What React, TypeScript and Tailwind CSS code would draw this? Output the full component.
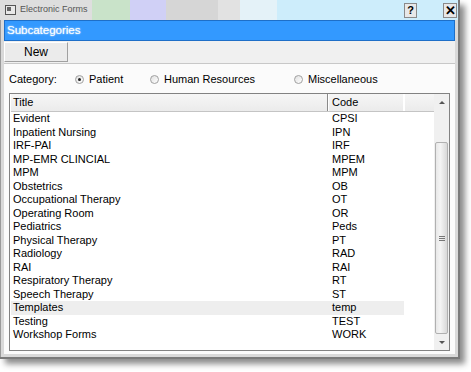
import React from "react";

const rows: [string, string][] = [
  ["Evident", "CPSI"],
  ["Inpatient Nursing", "IPN"],
  ["IRF-PAI", "IRF"],
  ["MP-EMR CLINCIAL", "MPEM"],
  ["MPM", "MPM"],
  ["Obstetrics", "OB"],
  ["Occupational Therapy", "OT"],
  ["Operating Room", "OR"],
  ["Pediatrics", "Peds"],
  ["Physical Therapy", "PT"],
  ["Radiology", "RAD"],
  ["RAI", "RAI"],
  ["Respiratory Therapy", "RT"],
  ["Speech Therapy", "ST"],
  ["Templates", "temp"],
  ["Testing", "TEST"],
  ["Workshop Forms", "WORK"],
];

function Radio({ checked, label }: { checked?: boolean; label: string }) {
  return (
    <div className="flex items-center gap-[5px]">
      <div className="w-[9px] h-[9px] rounded-full border border-[#a0a0a0] bg-[linear-gradient(135deg,#e0e0e0,#ffffff)] flex items-center justify-center">
        {checked && <div className="w-[3px] h-[3px] rounded-full bg-[#222]" />}
      </div>
      <span>{label}</span>
    </div>
  );
}

export default function App() {
  return (
    <div className="w-[471px] h-[372px] bg-white relative overflow-hidden" style={{ fontFamily: '"Liberation Sans", Arial, sans-serif' }}>
      <div className="w-[460px] h-[359px] flex flex-col bg-[#d9d9d9] border-r-2 border-b-2 border-[#7a7a7a] shadow-[5px_5px_6px_rgba(0,0,0,0.45)]">
        {/* Title bar */}
        <div className="h-[20px] flex items-center bg-[linear-gradient(to_right,#dedede_0px,#dedede_92px,#c9e3c9_92px,#c9e3c9_130px,#d0d0f6_130px,#d0d0f6_166px,#d6d6d6_166px,#d6d6d6_218px,#e2e2e2_218px,#e2e2e2_240px,#e4f2f8_240px,#e4f2f8_277px,#cdedfb_277px,#cdedfb_460px)]">
          <div className="ml-[5px] w-[11px] h-[10px] border border-[#555] bg-[#e8e8e8] flex items-start">
            <div className="w-[4px] h-[4px] bg-[#666] ml-[1px] mt-[1px]" />
          </div>
          <span className="ml-[4px] text-[9px] text-[#555]">Electronic Forms</span>
          <div className="flex-1" />
          <div className="w-[13px] h-[15px] border border-[#8a8a8a] bg-[#e8e8e8] text-[11px] font-bold text-black flex items-center justify-center leading-none">?</div>
          <div className="w-[26px]" />
          <div className="w-[14px] h-[15px] border border-[#8a8a8a] bg-[#e8e8e8] text-[13px] font-bold text-black flex items-center justify-center leading-none mr-[1px]">✕</div>
        </div>
        <div className="flex-1 flex flex-col px-[3px] pb-[3px] border-l border-[#9a9a9a]">
          {/* Blue band */}
          <div className="h-[21px] bg-[#3399ff] border border-[#1e6fc8] flex items-center pl-[2px]">
            <span className="text-[11.5px] text-white [text-shadow:0_0_1px_#9fd0ff,0_0_2px_#cfe8ff]">Subcategories</span>
          </div>
          {/* Toolbar */}
          <div className="h-[23px] bg-[#f0f0f0] border-b border-[#c8c8c8] flex items-center">
            <div className="w-[64px] h-[20px] bg-[#ebebeb] border border-t-white border-l-white border-r-[#a0a0a0] border-b-[#a0a0a0] text-[12px] flex items-center justify-center">New</div>
          </div>
          {/* Body */}
          <div className="flex-1 bg-[#fbfbfb] flex flex-col px-[5px] text-[11px] text-black">
            <div className="h-[29px] flex items-center pt-[1px]">
              <span className="w-[66px]">Category:</span>
              <div className="w-[75px]"><Radio checked label="Patient" /></div>
              <div className="w-[144px]"><Radio label="Human Resources" /></div>
              <Radio label="Miscellaneous" />
            </div>
            {/* List */}
            <div className="h-[258px] border border-[#828282] bg-white flex">
              <div className="w-[429px] flex flex-col pl-[1px]">
                <div className="h-[18px] flex bg-[linear-gradient(#f6f6f6,#ebebeb)] border-b border-[#c4c4c4]">
                  <div className="w-[317px] pl-[2px] border-r border-[#8a8a8a] flex items-center">Title</div>
                  <div className="w-[76px] pl-[3px] border-l border-white border-r border-[#8a8a8a] flex items-center">Code</div>
                  <div className="flex-1 border-l border-white" />
                </div>
                {rows.map(([t, c]) => (
                  <div key={t} className="h-[13.5px] flex leading-[13.5px]">
                    <div className={`w-[393px] flex ${t === "Templates" ? "bg-[#eeeeee]" : ""}`}>
                      <div className="w-[318px] pl-[2px]">{t}</div>
                      <div className="flex-1 pl-[3px]">{c}</div>
                    </div>
                  </div>
                ))}
              </div>
              {/* Scrollbar */}
              <div className="w-[15px] flex flex-col bg-[#f0f0f0] ml-auto">
                <div className="h-[16px] flex items-center justify-center">
                  <div className="w-0 h-0 border-l-[3px] border-r-[3px] border-b-[3px] border-l-transparent border-r-transparent border-b-[#555]" />
                </div>
                <div className="h-[32px]" />
                <div className="flex-1 mx-[1px] rounded-[2px] border border-[#b0b0b0] bg-[linear-gradient(to_right,#e8e8e8,#f4f4f4_40%,#d8d8d8)] flex flex-col items-center justify-center gap-[1px]">
                  <div className="w-[6px] h-[1px] bg-[#777]" />
                  <div className="w-[6px] h-[1px] bg-[#777]" />
                  <div className="w-[6px] h-[1px] bg-[#777]" />
                </div>
                <div className="h-[16px] flex items-center justify-center">
                  <div className="w-0 h-0 border-l-[3px] border-r-[3px] border-t-[3px] border-l-transparent border-r-transparent border-t-[#555]" />
                </div>
              </div>
            </div>
            <div className="flex-1" />
          </div>
        </div>
      </div>
    </div>
  );
}
